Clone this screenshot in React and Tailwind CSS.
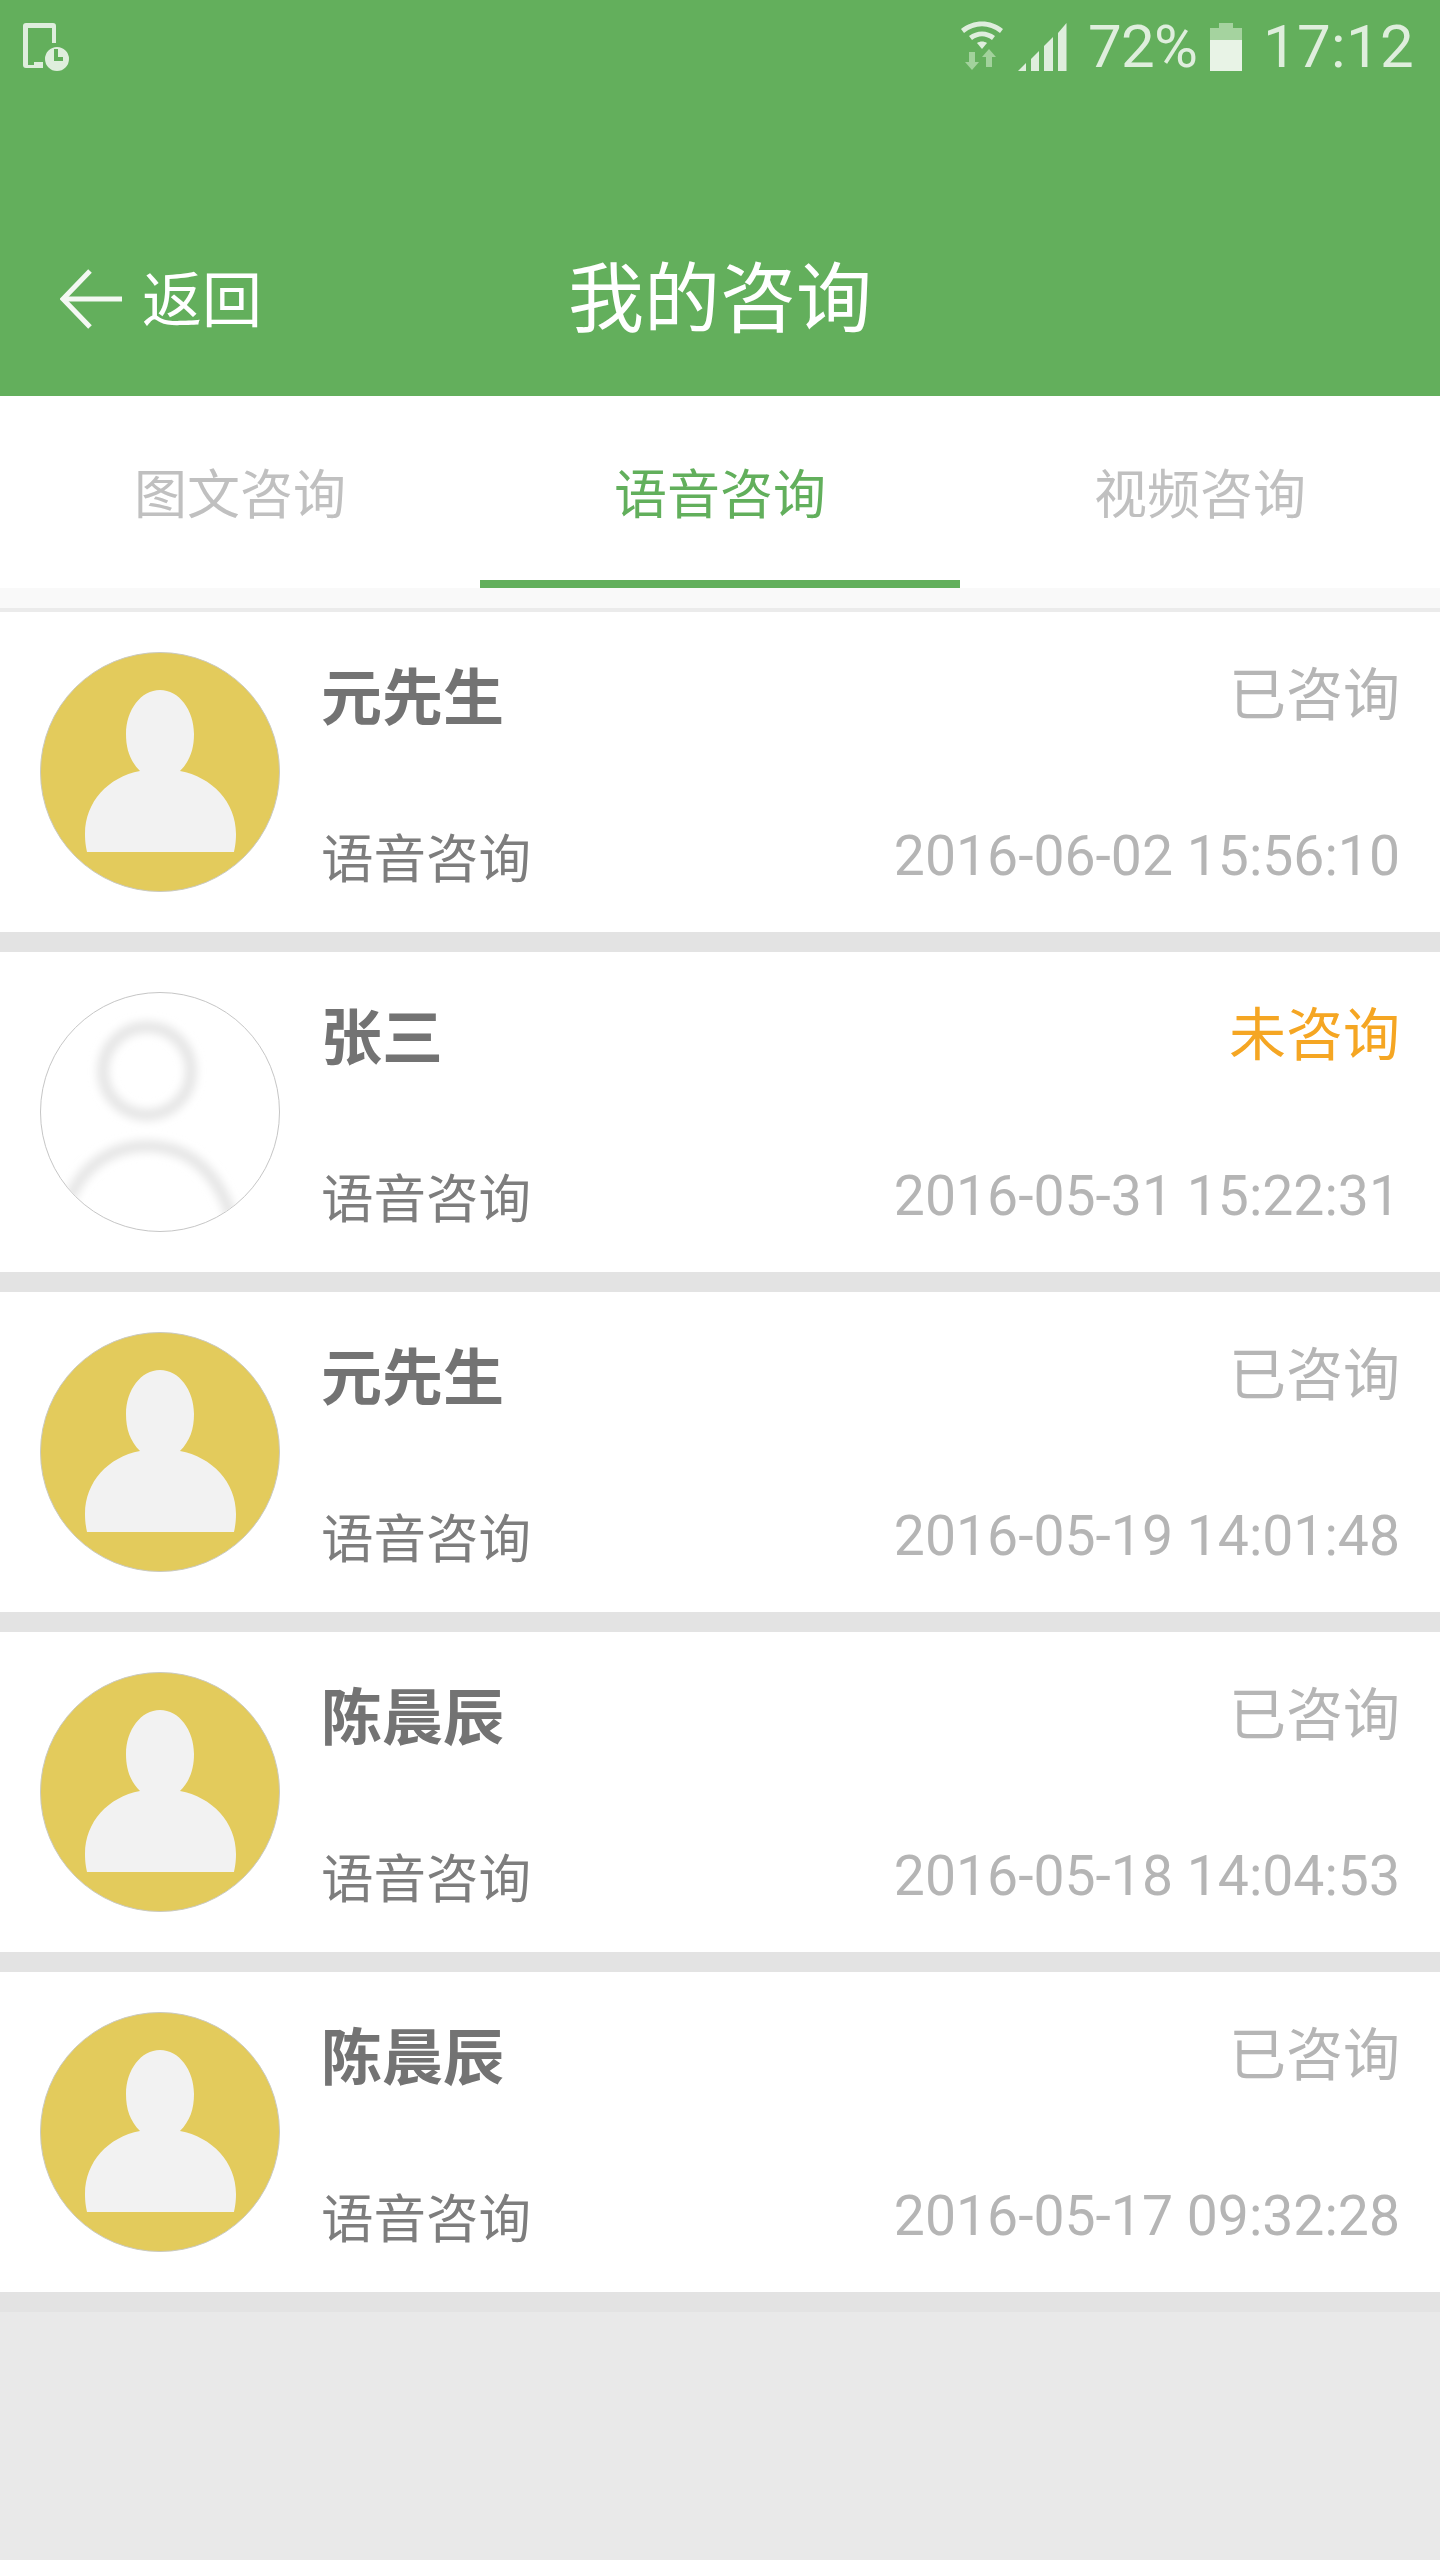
import { Fragment } from "react";

const FONT = "[font-family:Roboto,'Noto_Sans_CJK_SC',sans-serif]";

const TABS = [
  { label: "图文咨询", active: false },
  { label: "语音咨询", active: true },
  { label: "视频咨询", active: false },
];

const RECORDS = [
  { name: "元先生", status: "已咨询", time: "2016-06-02 15:56:10" },
  { name: "张三", status: "未咨询", time: "2016-05-31 15:22:31", blank: true },
  { name: "元先生", status: "已咨询", time: "2016-05-19 14:01:48" },
  { name: "陈晨辰", status: "已咨询", time: "2016-05-18 14:04:53" },
  { name: "陈晨辰", status: "已咨询", time: "2016-05-17 09:32:28" },
];

const YellowAvatar = () => (
  <svg width="240" height="240" viewBox="0 0 240 240" className="shrink-0">
    <circle cx="120" cy="120" r="119.5" fill="#e3cb5c" stroke="#c9c9c0" strokeWidth="1" />
    <path
      d="M100 119C90 109 86 97 86 82C86 58 101 38 120 38C139 38 154 58 154 82C154 97 150 109 140 119C172 125 196 150 196 182C196 190 195 195 194 200H47C46 195 45 190 45 182C45 150 68 125 100 119Z"
      fill="#f2f2f2"
    />
  </svg>
);

const BlankAvatar = () => (
  <svg width="240" height="240" viewBox="0 0 240 240" className="shrink-0">
    <defs>
      <filter id="soft" x="-20%" y="-20%" width="140%" height="140%">
        <feGaussianBlur stdDeviation="4" />
      </filter>
      <clipPath id="round">
        <circle cx="120" cy="120" r="119" />
      </clipPath>
    </defs>
    <circle cx="120" cy="120" r="119.5" fill="#ffffff" stroke="#c6c6c6" strokeWidth="1" />
    <g clipPath="url(#round)">
      <g filter="url(#soft)" fill="none" stroke="#e6e6e6" strokeWidth="12">
        <circle cx="107" cy="79" r="44" />
        <path d="M28 210C44 170 76 154 107 154C144 154 176 175 192 226" />
      </g>
    </g>
  </svg>
);

const StatusBar = () => (
  <div className="flex h-[100px] items-start justify-between">
    <svg width="50" height="50" viewBox="0 0 50 50" className="ml-[22px] mt-[22px]" fill="#dfeedd">
      <path d="M1 4a3 3 0 0 1 3-3h27a3 3 0 0 1 3 3v17h-4V6H6v37h6v-3h9v6H4a3 3 0 0 1-3-3Z" />
      <path fillRule="evenodd" d="M35 25a12 12 0 1 1 0 24a12 12 0 0 1 0-24ZM32 27v12h9v-4h-5v-8Z" />
    </svg>
    <div className="mr-[26px] mt-[22px] flex items-center text-[60px] leading-[50px] text-[#dfeedd]">
      <svg width="44" height="50" viewBox="0 0 44 50" className="-mt-[2px]">
        <path d="M1 8C13-2 31-2 43 8L40 12C29 3 15 3 4 12Z" fill="#dfeedd" />
        <path d="M9 15C17 9 27 9 35 15L32 19C25 14 19 14 12 19Z" fill="#dfeedd" />
        <path d="M17 22C20 20 24 20 27 22L22 28Z" fill="#dfeedd" />
        <path d="M9 31H15V41H19L12 49L5 41H9Z" fill="#a2d29c" />
        <path d="M26 46V36H22L29 28L36 36H32V46Z" fill="#a2d29c" />
      </svg>
      <svg width="50" height="50" viewBox="0 0 50 50" className="ml-[14px]" fill="#dfeedd">
        <path d="M0 49L8 41V49Z" />
        <path d="M13 37L21 29V49H13Z" />
        <path d="M26 24L35 15V49H26Z" />
        <path d="M40 11L48.5 1V49H40Z" />
      </svg>
      <span className="ml-[20px] tracking-[-0.8px]">72%</span>
      <svg width="32" height="48" viewBox="0 0 32 48" className="ml-[13px]">
        <path d="M9 0H23V5H32V17H0V5H9Z" fill="#a5d39f" />
        <path d="M0 17H32V48H0Z" fill="#e8f3e6" />
      </svg>
      <span className="ml-[21px] tracking-[0.3px]">17:12</span>
    </div>
  </div>
);

const NavBar = () => (
  <div className="relative flex h-[296px] items-start">
    <div className="ml-[60px] mt-[161px] flex items-center text-white">
      <svg width="62" height="60" viewBox="0 0 62 60" fill="none" stroke="#f4f8f3" strokeWidth="5">
        <path d="M30 2L3 30L30 58" />
        <path d="M3 30H62" />
      </svg>
      <span className="ml-[20px] pt-[6px] text-[60px] leading-[70px]">返回</span>
    </div>
    <span className="absolute left-0 right-0 top-[155px] text-center text-[76px] leading-[90px] text-white">
      我的咨询
    </span>
  </div>
);

const ConsultTabs = () => (
  <div className="flex h-[192px] bg-white">
    {TABS.map((tab) => (
      <div
        key={tab.label}
        className={`flex flex-1 items-center justify-center border-b-[8px] pt-[17px] text-[53px] ${
          tab.active ? "border-[#62af5c] text-[#62af5c]" : "border-transparent text-[#c0c0c0]"
        }`}
      >
        {tab.label}
      </div>
    ))}
  </div>
);

const RecordCard = ({ record }) => (
  <div className="flex h-[320px] items-center bg-white px-[40px]">
    {record.blank ? <BlankAvatar /> : <YellowAvatar />}
    <div className="ml-[41px] flex h-[240px] flex-1 flex-col justify-between">
      <div className="flex items-start justify-between pt-[12px]">
        <span className="mt-[3px] text-[61px] font-bold leading-[64px] text-[#737373]">{record.name}</span>
        <span className={`text-[57px] leading-[64px] ${record.blank ? "text-[#f5a623]" : "text-[#b5b5b5]"}`}>
          {record.status}
        </span>
      </div>
      <div className="flex items-end justify-between">
        <span className="text-[52.5px] leading-[64px] text-[#7d7d7d]">语音咨询</span>
        <span className="mb-[3px] text-[55.3px] leading-[64px] text-[#b5b5b5]">{record.time}</span>
      </div>
    </div>
  </div>
);

export default function App() {
  return (
    <div className={`min-h-[2560px] w-[1440px] bg-[#e9e9e9] ${FONT}`}>
      <header className="bg-[#63af5c]">
        <StatusBar />
        <NavBar />
      </header>
      <ConsultTabs />
      <div className="h-[20px] bg-[#f9f9f9]" />
      <div className="h-[4px] bg-[#ebebeb]" />
      {RECORDS.map((record, index) => (
        <Fragment key={index}>
          <RecordCard record={record} />
          <div className="h-[20px] bg-[#e3e3e3]" />
        </Fragment>
      ))}
    </div>
  );
}
